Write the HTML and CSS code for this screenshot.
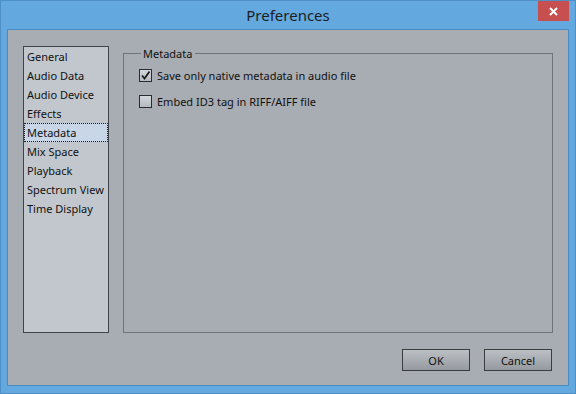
FILE: index.html
```html
<!DOCTYPE html>
<html>
<head>
<meta charset="utf-8">
<link rel="stylesheet" href="styles.css">
</head>
<body>
<div class="window">
  <div class="titlebar">
    <span class="title">Preferences</span>
    <button class="close" aria-label="Close">
      <svg width="9" height="9" viewBox="0 0 9 9"><path d="M1 1 L8 8 M8 1 L1 8" stroke="#fff" stroke-width="2" fill="none"/></svg>
    </button>
  </div>
  <div class="client">
    <div class="main">
      <ul class="nav">
        <li>General</li>
        <li>Audio Data</li>
        <li>Audio Device</li>
        <li>Effects</li>
        <li class="selected">Metadata</li>
        <li>Mix Space</li>
        <li>Playback</li>
        <li>Spectrum View</li>
        <li>Time Display</li>
      </ul>
      <fieldset class="group">
        <legend>Metadata</legend>
        <label class="check">
          <span class="box"><svg width="11" height="11" viewBox="0 0 11 11"><path d="M2 5.5 L4.5 8.5 L9.5 1.5" stroke="#1c1c1c" stroke-width="1.8" fill="none"/></svg></span>
          <span>Save only native metadata in audio file</span>
        </label>
        <label class="check">
          <span class="box"></span>
          <span>Embed ID3 tag in RIFF/AIFF file</span>
        </label>
      </fieldset>
    </div>
    <div class="buttons">
      <button class="btn">OK</button>
      <button class="btn">Cancel</button>
    </div>
  </div>
</div>
</body>
</html>
```
FILE: styles.css
```css
* { box-sizing: border-box; }
html, body { margin: 0; padding: 0; }
body {
  width: 576px;
  height: 394px;
  overflow: hidden;
  font-family: "Noto Sans", "DejaVu Sans", sans-serif;
}
.window {
  width: 576px;
  height: 394px;
  background: #63a8df;
  border: 1px solid #4f8fc8;
  display: flex;
  flex-direction: column;
  position: relative;
}
.titlebar {
  height: 28px;
  display: flex;
  justify-content: center;
  align-items: center;
}
.title {
  font-size: 15px;
  color: #1d1d1d;
  line-height: 28px;
}
.close {
  position: absolute;
  top: 0;
  right: 6px;
  width: 31px;
  height: 20px;
  border: 0;
  padding: 0;
  background: #c74f50;
  display: flex;
  align-items: center;
  justify-content: center;
}
.client {
  margin: 0 6px;
  height: 357px;
  background: #a8adb4;
  border: 1px solid #4b8bc4;
  display: flex;
  flex-direction: column;
  padding: 16px 15px 0 15px;
}
.main {
  display: flex;
  height: 287px;
  gap: 14px;
}
.nav {
  list-style: none;
  margin: 0;
  padding: 0;
  width: 86px;
  background: #c2c7ce;
  border: 1px solid #40434a;
  font-size: 11px;
  color: #111;
}
.nav li {
  height: 19px;
  line-height: 18px;
  padding-left: 2px;
  border: 1px solid transparent;
  white-space: nowrap;
}
.nav li.selected {
  background: #c8d6e8;
  border: 1px dotted #1a1a1a;
}
.group {
  flex: 1;
  margin: 0;
  padding: 0 0 0 15px;
  border: 1px solid #6f7379;
  min-width: 0;
}
.group legend {
  margin-left: 2px;
  padding: 0 3px 0 2px;
  font-size: 11px;
  line-height: 15px;
  color: #111;
}
.check {
  display: flex;
  align-items: center;
  gap: 5px;
  height: 13px;
  font-size: 11px;
  color: #111;
  margin-top: 8px;
  margin-bottom: 13px;
}
.box {
  width: 13px;
  height: 13px;
  border: 1px solid #2a2c30;
  background: linear-gradient(#d3d6da, #b6bac0);
  display: flex;
  align-items: center;
  justify-content: center;
}
.check + .check { margin-top: 0; }
.buttons {
  display: flex;
  justify-content: flex-end;
  gap: 14px;
  margin-top: 16px;
  padding-right: 1px;
}
.btn {
  width: 68px;
  height: 22px;
  border: 1px solid #3a3d42;
  background: linear-gradient(#bcc0c5, #959aa0);
  font-family: "Noto Sans", "DejaVu Sans", sans-serif;
  font-size: 11px;
  color: #111;
  padding: 0;
}
```
